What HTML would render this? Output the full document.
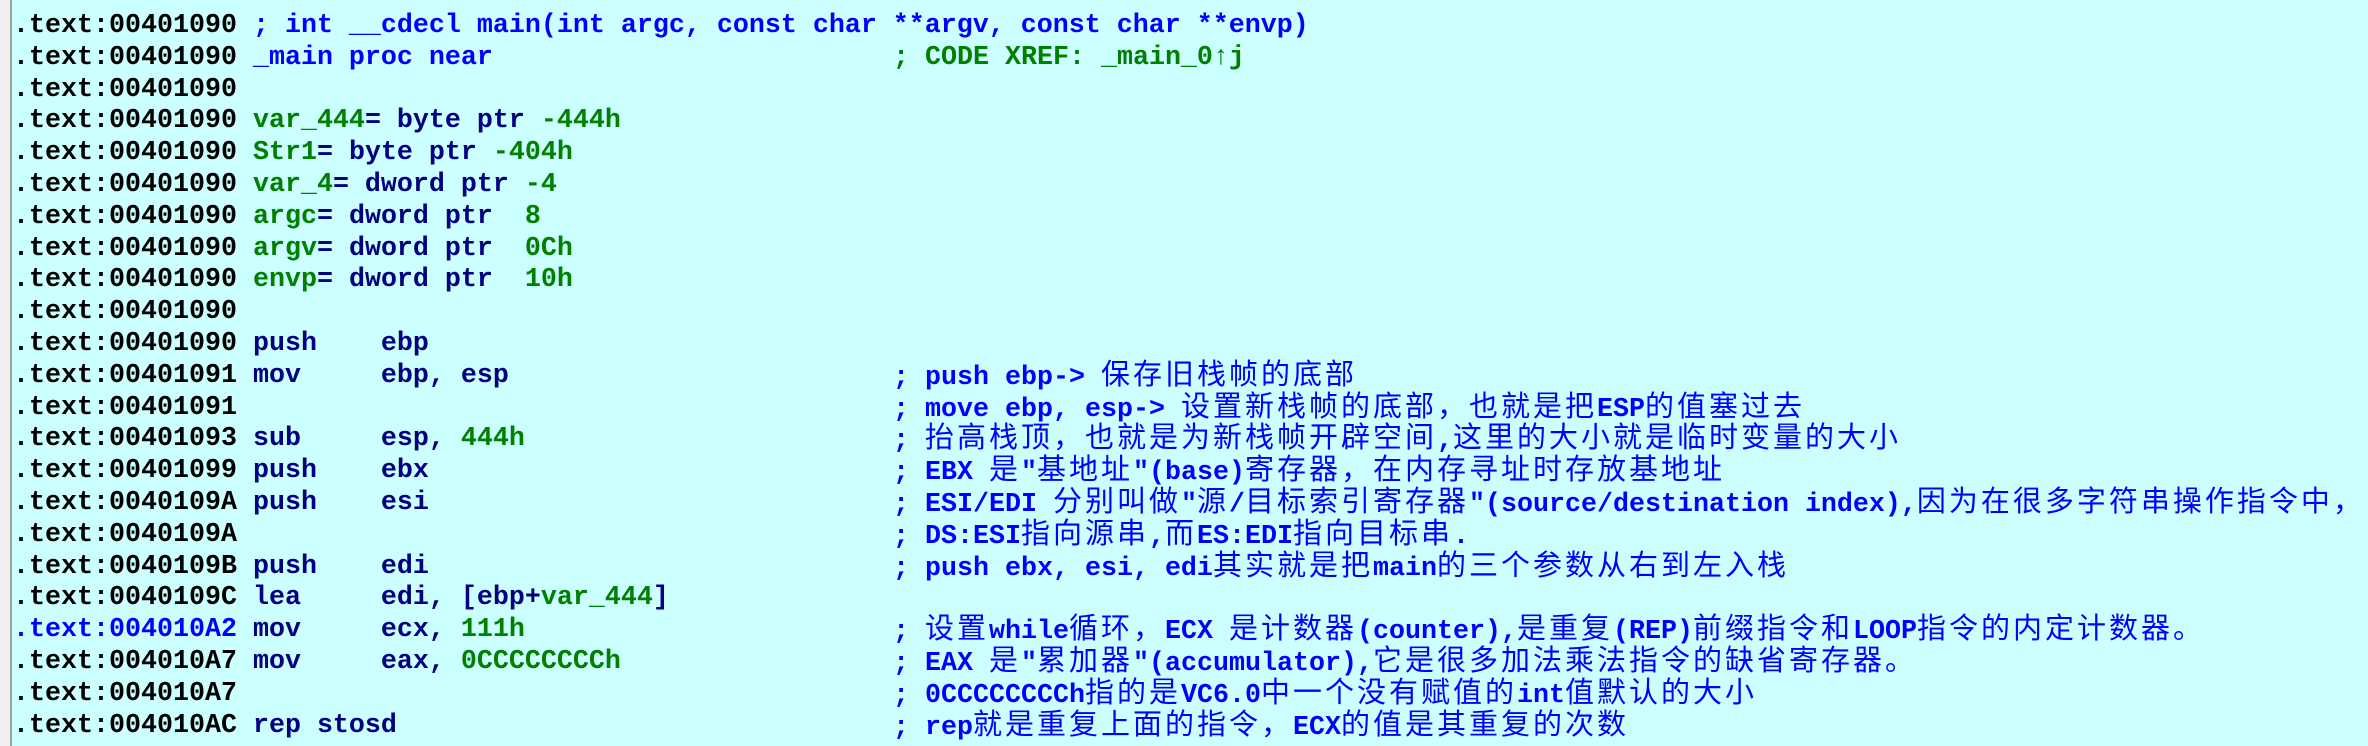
<!DOCTYPE html>
<html><head><meta charset="utf-8"><style>
html,body{margin:0;padding:0;width:2368px;height:746px;overflow:hidden;background:#ccffff}
#strip{position:absolute;left:0;top:0;width:10px;height:746px;background:#f0f0f0;border-right:2px solid #a0a0a0}
#c{position:absolute;left:13px;top:11px;font-family:"Liberation Mono",monospace;font-weight:bold;font-size:26.67px;color:#000}
.l{position:relative;height:31.8px;line-height:31.8px;white-space:pre;overflow:visible}
.m{position:absolute;left:880px;top:-3px;color:#0000ff;white-space:pre}
.k{color:#000080}.g{color:#008000}.b{color:#0000ff}
i{font-style:normal;font-weight:normal;font-family:"Noto Sans CJK SC","WenQuanYi Zen Hei",sans-serif;font-size:29px;letter-spacing:3px;line-height:1}
</style></head><body><div id="strip"></div><div id="c"><div class="l">.text:00401090 <span class="b">; int __cdecl main(int argc, const char **argv, const char **envp)</span></div><div class="l">.text:00401090 <span class="b">_main proc near</span><span class="m g" style="top:0">; CODE XREF: _main_0↑j</span></div><div class="l">.text:00401090</div><div class="l">.text:00401090 <span class="g">var_444</span><span class="k">= byte ptr </span><span class="g">-444h</span></div><div class="l">.text:00401090 <span class="g">Str1</span><span class="k">= byte ptr </span><span class="g">-404h</span></div><div class="l">.text:00401090 <span class="g">var_4</span><span class="k">= dword ptr </span><span class="g">-4</span></div><div class="l">.text:00401090 <span class="g">argc</span><span class="k">= dword ptr  </span><span class="g">8</span></div><div class="l">.text:00401090 <span class="g">argv</span><span class="k">= dword ptr  </span><span class="g">0Ch</span></div><div class="l">.text:00401090 <span class="g">envp</span><span class="k">= dword ptr  </span><span class="g">10h</span></div><div class="l">.text:00401090</div><div class="l">.text:00401090 <span class="k">push    ebp</span></div><div class="l">.text:00401091 <span class="k">mov     ebp, esp</span><span class="m">; push ebp-&gt; <i>保存旧栈帧的底部</i></span></div><div class="l">.text:00401091<span class="m">; move ebp, esp-&gt; <i>设置新栈帧的底部，也就是把</i>ESP<i>的值塞过去</i></span></div><div class="l">.text:00401093 <span class="k">sub     esp, </span><span class="g">444h</span><span class="m">; <i>抬高栈顶，也就是为新栈帧开辟空间</i>,<i>这里的大小就是临时变量的大小</i></span></div><div class="l">.text:00401099 <span class="k">push    ebx</span><span class="m">; EBX <i>是</i>"<i>基地址</i>"(base)<i>寄存器，在内存寻址时存放基地址</i></span></div><div class="l">.text:0040109A <span class="k">push    esi</span><span class="m">; ESI/EDI <i>分别叫做</i>"<i>源</i>/<i>目标索引寄存器</i>"(source/destination index),<i>因为在很多字符串操作指令中，</i></span></div><div class="l">.text:0040109A<span class="m">; DS:ESI<i>指向源串</i>,<i>而</i>ES:EDI<i>指向目标串</i>.</span></div><div class="l">.text:0040109B <span class="k">push    edi</span><span class="m">; push ebx, esi, edi<i>其实就是把</i>main<i>的三个参数从右到左入栈</i></span></div><div class="l">.text:0040109C <span class="k">lea     edi, [ebp+</span><span class="g">var_444</span><span class="k">]</span></div><div class="l"><span class="b">.text:004010A2</span> <span class="k">mov     ecx, </span><span class="g">111h</span><span class="m">; <i>设置</i>while<i>循环，</i>ECX <i>是计数器</i>(counter),<i>是重复</i>(REP)<i>前缀指令和</i>LOOP<i>指令的内定计数器。</i></span></div><div class="l">.text:004010A7 <span class="k">mov     eax, </span><span class="g">0CCCCCCCCh</span><span class="m">; EAX <i>是</i>"<i>累加器</i>"(accumulator),<i>它是很多加法乘法指令的缺省寄存器。</i></span></div><div class="l">.text:004010A7<span class="m">; 0CCCCCCCCh<i>指的是</i>VC6.0<i>中一个没有赋值的</i>int<i>值默认的大小</i></span></div><div class="l">.text:004010AC <span class="k">rep stosd</span><span class="m">; rep<i>就是重复上面的指令，</i>ECX<i>的值是其重复的次数</i></span></div></div></body></html>
